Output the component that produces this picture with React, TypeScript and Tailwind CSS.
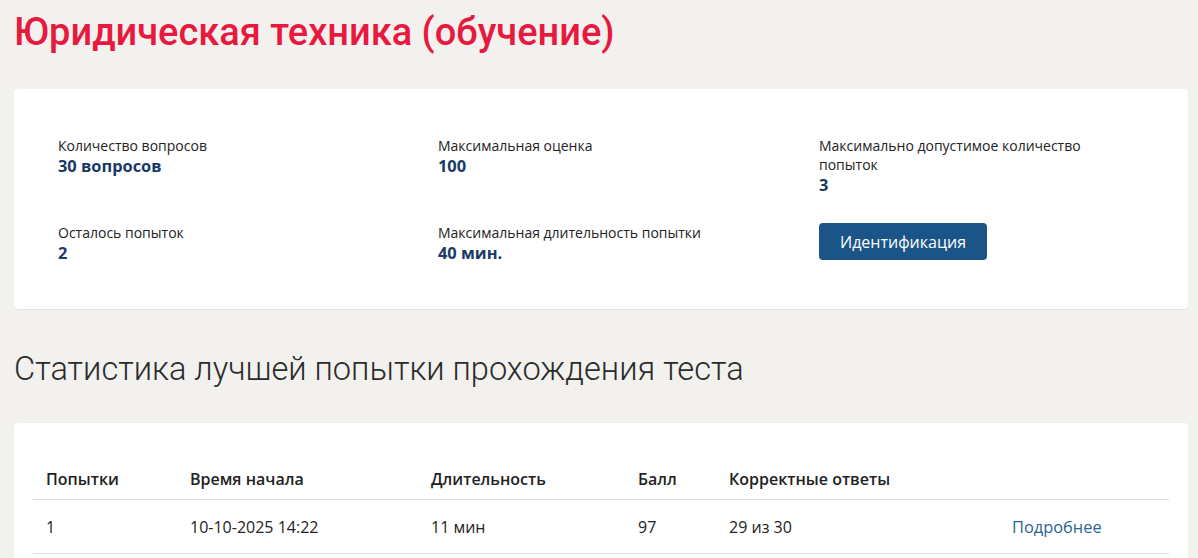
import React from "react";

const body = { fontFamily: '"Open Sans", "Liberation Sans", sans-serif' };
const head = { fontFamily: 'Roboto, "Open Sans", sans-serif' };

function Item({ label, value }: { label: string; value: string }) {
  return (
    <div>
      <div className="text-[14px] leading-[19px] text-[#222]">{label}</div>
      <div className="text-[16.4px] leading-[21px] font-bold text-[#173a66]">{value}</div>
    </div>
  );
}

export default function App() {
  return (
    <div className="min-h-[558px] w-[1198px] bg-[#f2f1ee] pl-[14px] pr-[10px]" style={body}>
      <h1
        className="pt-[10px] text-[38px] leading-[44px] font-medium text-[#e8193f]"
        style={head}
      >
        Юридическая техника (обучение)
      </h1>

      <div className="mt-[35px] rounded-[4px] bg-white shadow-[0_1px_1px_rgba(0,0,0,0.06)] pl-[44px] pb-[46px]">
        <div className="grid grid-cols-[380px_381px_1fr] gap-y-[28px] pt-[47px]">
          <Item label="Количество вопросов" value="30 вопросов" />
          <Item label="Максимальная оценка" value="100" />
          <div className="max-w-[300px]">
            <Item label="Максимально допустимое количество попыток" value="3" />
          </div>
          <Item label="Осталось попыток" value="2" />
          <Item label="Максимальная длительность попытки" value="40 мин." />
          <div>
            <button className="h-[37px] w-[168px] rounded-[4px] bg-[#1b5588] text-[16px] text-white">
              Идентификация
            </button>
          </div>
        </div>
      </div>

      <h2
        className="mt-[40px] text-[32.6px] leading-[40px] font-light text-[#2b2b2b]"
        style={head}
      >
        Статистика лучшей попытки прохождения теста
      </h2>

      <div className="mt-[34px] rounded-[4px] bg-white px-[19px] pt-[38px] pb-[20px]">
        <table className="w-full table-fixed border-collapse text-[16px] text-[#222]">
          <colgroup>
            <col className="w-[144px]" />
            <col className="w-[241px]" />
            <col className="w-[207px]" />
            <col className="w-[91px]" />
            <col className="w-[283px]" />
            <col />
          </colgroup>
          <thead>
            <tr className="border-b border-[#dedede]">
              <th className="h-[38px] px-[13px] pb-[2px] text-left font-semibold">Попытки</th>
              <th className="px-[13px] pb-[2px] text-left font-semibold">Время начала</th>
              <th className="px-[13px] pb-[2px] text-left font-semibold">Длительность</th>
              <th className="px-[13px] pb-[2px] text-left font-semibold">Балл</th>
              <th className="px-[13px] pb-[2px] text-left font-semibold">Корректные ответы</th>
              <th className="px-[13px]"></th>
            </tr>
          </thead>
          <tbody>
            <tr className="border-b border-[#dedede]">
              <td className="h-[54px] px-[13px] pt-[2px]">1</td>
              <td className="px-[13px] pt-[2px]">10-10-2025 14:22</td>
              <td className="px-[13px] pt-[2px]">11 мин</td>
              <td className="px-[13px] pt-[2px]">97</td>
              <td className="px-[13px] pt-[2px]">29 из 30</td>
              <td className="px-[13px] pt-[2px] text-[16.4px] text-[#2a6496]">Подробнее</td>
            </tr>
          </tbody>
        </table>
      </div>
    </div>
  );
}
